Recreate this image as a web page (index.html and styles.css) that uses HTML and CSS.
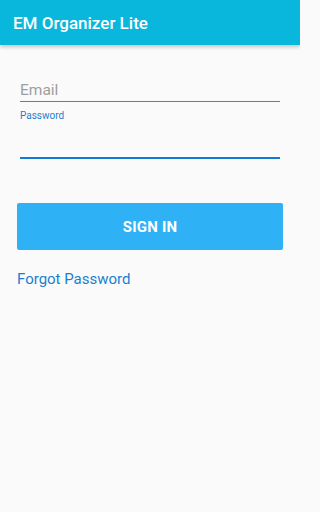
FILE: index.html
```html
<!DOCTYPE html>
<html>
<head>
<meta charset="utf-8">
<link rel="stylesheet" href="styles.css">
</head>
<body>
<header class="appbar"><h1 class="title">EM Organizer Lite</h1></header>
<main class="content">
  <div class="field">
    <div class="placeholder">Email</div>
    <div class="line"></div>
  </div>
  <div class="field focused">
    <div class="label">Password</div>
    <div class="line active"></div>
  </div>
  <button class="signin">SIGN IN</button>
  <a class="forgot">Forgot Password</a>
</main>
</body>
</html>
```
FILE: styles.css
```css
html, body { margin: 0; padding: 0; }
html { background: #fafafa; }
body {
  width: 300px;
  min-height: 512px;
  background: #fafafa;
  font-family: Roboto, "Noto Sans", sans-serif;
}
.appbar {
  height: 45px;
  background: #09b7dc;
  box-shadow: 0 2px 4px rgba(0,0,0,0.22);
  display: flex; align-items: center;
  padding-left: 13px;
  position: relative;
}
.title {
  margin: 0; color: #fff; font-size: 17px; font-weight: 500;
  line-height: 20px; margin-top: 1px;
}
.content { padding: 0 17px; }
.field { padding: 0 3px; }
.placeholder {
  margin-top: 35px;
  font-size: 15.5px; color: #9e9e9e; line-height: 20px;
}
.line { height: 1px; background: #7a7a7a; margin-top: 1px; }
.label {
  margin-top: 7px;
  font-size: 10px; color: #1a7fd1; line-height: 14px;
}
.line.active { height: 2px; background: #1478d6; margin-top: 34px; }
.signin {
  display: block; width: 100%; height: 47px;
  margin-top: 44px;
  background: #2fb2f5; border: none; border-radius: 2px;
  color: #fff; font-family: Roboto, sans-serif; font-weight: 700; font-size: 15px;
  letter-spacing: 0.2px;
}
.forgot {
  display: block; margin-top: 20px;
  font-size: 15px; color: #1a7fd1; line-height: 18px;
}
```
